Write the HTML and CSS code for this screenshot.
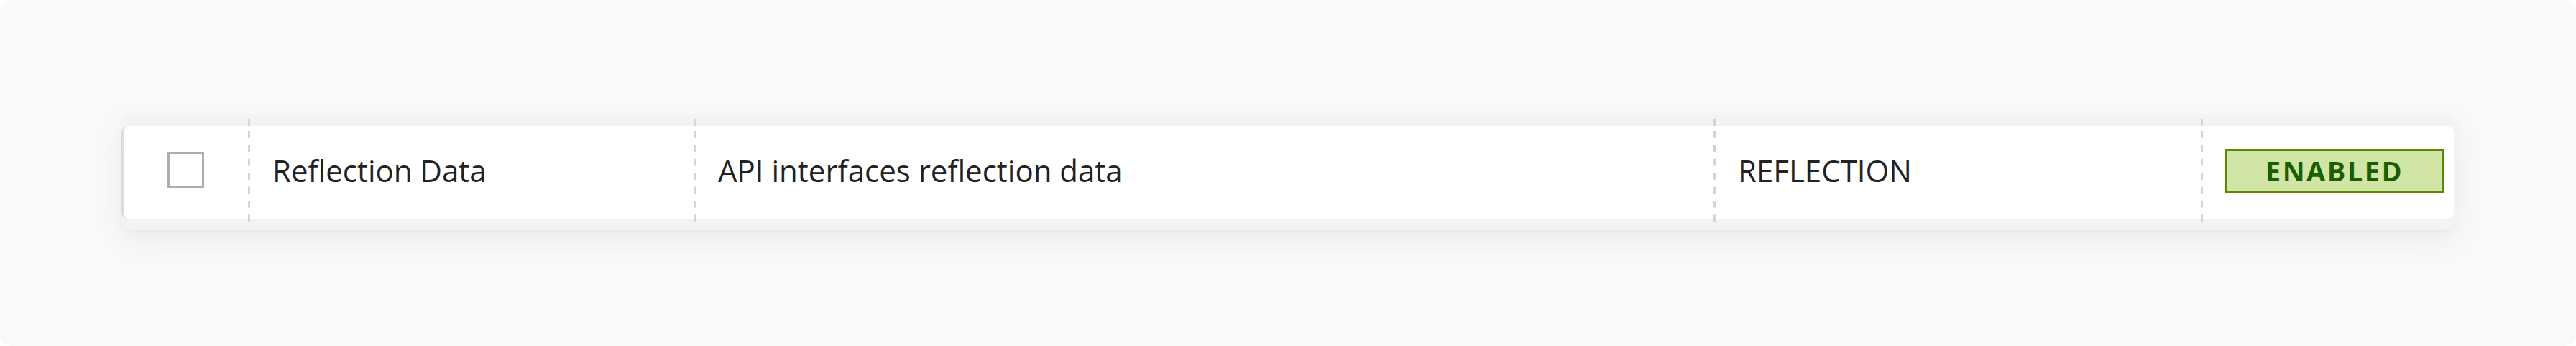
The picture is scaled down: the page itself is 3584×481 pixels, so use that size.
FILE: index.html
```html
<!doctype html>
<html>
  <head>
    <title>Data sources</title>
    <meta name="viewport" content="width=device-width, initial-scale=1.0" />
    <link rel="stylesheet" href="styles.css">
  </head>
  <body>
    <div class="page">
      <div class="card">
        <table class="grid">
          <colgroup>
            <col class="col-check" />
            <col class="col-name" />
            <col class="col-desc" />
            <col class="col-type" />
            <col class="col-status" />
          </colgroup>
          <thead>
            <tr><th></th><th></th><th></th><th></th><th></th></tr>
          </thead>
          <tbody>
            <tr class="item">
              <td class="check"><span class="box"></span></td>
              <td>Reflection Data</td>
              <td>API interfaces reflection data</td>
              <td>REFLECTION</td>
              <td class="status"><span class="badge">Enabled</span></td>
            </tr>
          </tbody>
          <tfoot>
            <tr><td></td><td></td><td></td><td></td><td></td></tr>
          </tfoot>
        </table>
      </div>
    </div>
  </body>
</html>
```

FILE: styles.css
```css
html,
body {
  margin: 0;
  background: #fff;
}
body {
  font-family: "Open Sans", "Liberation Sans", sans-serif;
  color: #222;
}
.page {
  width: 3584px;
  height: 481px;
  box-sizing: border-box;
  padding: 160px 166px 0 168px;
  background: #f9f9f9;
  border-radius: 15px;
}
.card {
  background: #f3f3f3;
  border-radius: 18px;
  padding: 5px 4px 12px 1px;
  box-shadow:
    0 14px 40px rgba(0, 0, 0, 0.06),
    0 3px 8px rgba(0, 0, 0, 0.03);
}
.grid {
  width: 100%;
  table-layout: fixed;
  border-collapse: separate;
  border-spacing: 0;
}
.col-check {
  width: 176px;
}
.col-name {
  width: 620px;
}
.col-desc {
  width: 1419px;
}
.col-type {
  width: 678px;
}
.col-status {
  width: 352px;
}
.grid th,
.grid td {
  padding: 0 0 0 34px;
  text-align: left;
  font-weight: normal;
  --dash: linear-gradient(#d4d4d4 50%, transparent 50%);
}
/* dashed column rules, drawn as a 3px strip so the dash rhythm matches */
.grid th:not(:first-child),
.grid td:not(:first-child) {
  background: var(--dash) 0 0 / 3px 19.4px repeat-y;
}
.grid thead th {
  height: 10px;
}
.grid tfoot td {
  height: 3px;
}
.item td {
  height: 130px;
  box-sizing: border-box;
  padding-top: 33px;
  background: #fff;
  font-size: 42px;
  line-height: 57px;
  vertical-align: top;
  white-space: nowrap;
}
.item td:not(:first-child) {
  background: var(--dash) 0 7px / 3px 19.4px repeat-y, #fff;
}
.item td:first-child {
  border-left: 3px solid #dcdcdc;
  border-radius: 10px 0 0 10px;
}
.item td:last-child {
  border-radius: 0 10px 10px 0;
}
.item td.check {
  padding: 36px 0 0;
  text-align: center;
}
.item td.status {
  padding-top: 32px;
}
.box {
  display: inline-block;
  width: 51px;
  height: 51px;
  box-sizing: border-box;
  border: 3px solid #adadad;
  background: #fff;
  vertical-align: top;
}
.badge {
  display: inline-block;
  width: 304px;
  height: 61px;
  box-sizing: border-box;
  border: 3px solid #5b8a00;
  background: #d1e6a6;
  color: #1b5e00;
  font-size: 38px;
  font-weight: bold;
  letter-spacing: 2.5px;
  line-height: 55px;
  text-align: center;
  text-transform: uppercase;
  vertical-align: top;
}
```
